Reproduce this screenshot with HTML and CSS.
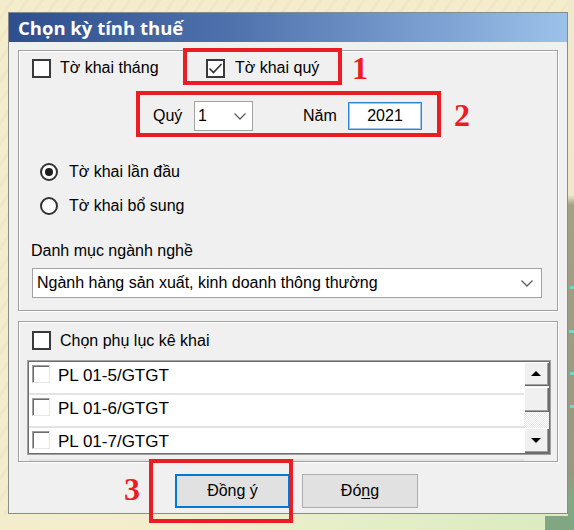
FILE: index.html
```html
<!DOCTYPE html>
<html lang="vi">
<head>
<meta charset="utf-8">
<title>Chọn kỳ tính thuế</title>
<link rel="stylesheet" href="styles.css">
</head>
<body>
<div class="window">
  <div class="titlebar">Chọn kỳ tính thuế</div>

  <div class="group group-main">
    <div class="row-type">
      <div class="opt opt-month"><span class="chk"></span><span class="txt">Tờ khai tháng</span></div>
      <div class="opt opt-quarter"><span class="chk"><svg class="tick" width="15" height="15" viewBox="0 0 15 15"><polyline points="1.5,7.5 5.5,11.5 13.5,3" fill="none" stroke="#333" stroke-width="1.6"/></svg></span><span class="txt">Tờ khai quý</span></div>
    </div>

    <div class="row-period">
      <span class="lbl-q">Quý</span>
      <div class="combo combo-q"><span>1</span><svg width="12" height="7" viewBox="0 0 12 7"><polyline points="0.5,0.5 6,6 11.5,0.5" fill="none" stroke="#606060" stroke-width="1.3"/></svg></div>
      <span class="lbl-y">Năm</span>
      <div class="textbox">2021</div>
    </div>

    <div class="opt radio-row r1"><span class="radio on"></span><span class="txt">Tờ khai lần đầu</span></div>
    <div class="opt radio-row r2"><span class="radio"></span><span class="txt">Tờ khai bổ sung</span></div>

    <div class="field-label">Danh mục ngành nghề</div>
    <div class="combo combo-wide"><span>Ngành hàng sản xuất, kinh doanh thông thường</span><svg width="12" height="7" viewBox="0 0 12 7"><polyline points="0.5,0.5 6,6 11.5,0.5" fill="none" stroke="#606060" stroke-width="1.3"/></svg></div>
  </div>

  <div class="group group-annex">
    <div class="opt annex-head"><span class="chk"></span><span class="txt">Chọn phụ lục kê khai</span></div>
    <div class="listbox">
      <div class="rows">
        <div class="item"><span class="chk3d"></span><span>PL 01-5/GTGT</span></div>
        <div class="item"><span class="chk3d"></span><span>PL 01-6/GTGT</span></div>
        <div class="item"><span class="chk3d"></span><span>PL 01-7/GTGT</span></div>
      </div>
      <div class="vscroll">
        <div class="sbtn"><span class="arrow-up"></span></div>
        <div class="thumb"></div>
        <div class="track"></div>
        <div class="sbtn"><span class="arrow-down"></span></div>
      </div>
    </div>
  </div>

  <div class="buttons">
    <div class="btn btn-ok"><span>Đồn<u>g</u> ý</span></div>
    <div class="btn btn-close"><span>Đó<u>n</u>g</span></div>
  </div>
</div>

<div class="mark m1"></div>
<div class="mark m2"></div>
<div class="mark m3"></div>
<div class="num n1">1</div>
<div class="num n2">2</div>
<div class="num n3">3</div>
</body>
</html>
```

FILE: styles.css
```css
html, body {
  margin: 0;
}

body {
  position: relative;
  width: 574px;
  height: 530px;
  overflow: hidden;
  box-sizing: border-box;
  padding: 12px 0 0 8px;
  font-family: "Liberation Sans", Arial, sans-serif;
  font-size: 16px;
  color: #000;
  background:
    linear-gradient(#6fd9cf, #6fd9cf) 570px 286px / 4px 3px no-repeat,
    linear-gradient(#6fd9cf, #6fd9cf) 569px 330px / 5px 3px no-repeat,
    linear-gradient(#6fd9cf, #6fd9cf) 570px 372px / 4px 3px no-repeat,
    linear-gradient(#6fd9cf, #6fd9cf) 570px 405px / 4px 3px no-repeat,
    linear-gradient(#80a782, #80a782) right bottom / 29px 14px no-repeat,
    linear-gradient(to bottom, #f0e9cc 0, #efe8ca 195px, #a4a086 205px, #979880 470px, #83a883 500px, #80a782 100%) right top / 6px 100% no-repeat,
    linear-gradient(to right, #f3edcc 0, #f2eecb 170px, #e6efc7 330px, #dcebc0 540px) left bottom / 100% 16px no-repeat,
    repeating-linear-gradient(125deg, #f4edcb 0 9px, #f0e8c4 9px 12px);
}

/* window */
.window {
  width: 560px;
  height: 502px;
  box-sizing: border-box;
  border: 1px solid #8a8a8a;
  background: #f0f0f0;
}

.titlebar {
  height: 29px;
  line-height: 29px;
  padding-left: 9px;
  background: linear-gradient(to right, #2e4e8d 0%, #4f72ad 40%, #7a9fd0 75%, #9cc2ea 100%);
  color: #fff;
  font-family: "Open Sans", "Noto Sans", sans-serif;
  font-weight: 700;
  font-size: 18.5px;
  white-space: nowrap;
}

/* group boxes */
.group {
  margin: 0 9px;
  box-sizing: border-box;
  border: 1px solid #a0a0a0;
  box-shadow: inset 1px 1px 0 #fff, 1px 1px 0 #fff;
}

.group-main {
  margin-top: 8px;
  height: 261px;
  padding: 7px 0 0 13px;
}

.group-annex {
  margin-top: 10px;
  height: 141px;
  padding: 9px 0 0 13px;
}

/* options */
.opt {
  display: flex;
  align-items: center;
  line-height: 18px;
  white-space: nowrap;
}

.chk {
  width: 19px;
  height: 19px;
  box-sizing: border-box;
  border: 2px solid #3a3a3a;
  background: #fff;
  margin-right: 9px;
  flex: none;
  display: flex;
  align-items: center;
  justify-content: center;
}

.row-type {
  display: flex;
  height: 20px;
}

.opt-month {
  width: 174px;
}

.opt-quarter .chk {
  margin-right: 10px;
}

.row-period {
  display: flex;
  align-items: center;
  margin-top: 23px;
  height: 30px;
  padding-left: 121px;
}

.lbl-q {
  width: 41px;
}

.lbl-y {
  width: 45px;
  margin-left: 50px;
}

.combo {
  display: flex;
  align-items: center;
  justify-content: space-between;
  box-sizing: border-box;
  border: 1px solid #a2a2a2;
  background: #fff;
  white-space: nowrap;
}

.combo-q {
  width: 59px;
  height: 30px;
  padding: 0 6px 0 3px;
}

.textbox {
  width: 74px;
  height: 28px;
  box-sizing: border-box;
  border: 1px solid #2f86d8;
  box-shadow: inset 0 0 0 1px #9cc6ef;
  background: #fff;
  text-align: center;
  line-height: 26px;
}

.radio-row {
  height: 18px;
  padding-left: 8px;
}

.r1 {
  margin-top: 32px;
}

.r2 {
  margin-top: 16px;
}

.radio {
  width: 18px;
  height: 18px;
  box-sizing: border-box;
  border: 2px solid #333;
  border-radius: 50%;
  background: #fff;
  margin-right: 11px;
  flex: none;
  display: flex;
  align-items: center;
  justify-content: center;
}

.radio.on::after {
  content: "";
  width: 8px;
  height: 8px;
  border-radius: 50%;
  background: #1e1e1e;
}

.field-label {
  margin-top: 27px;
  line-height: 18px;
  margin-left: -1px;
}

.combo-wide {
  margin-top: 8px;
  width: 510px;
  height: 30px;
  padding: 0 8px 0 4px;
}

/* annex */
.annex-head {
  height: 19px;
}

.listbox {
  display: flex;
  margin: 10px 0 0 -5px;
  width: 524px;
  height: 95px;
  box-sizing: border-box;
  border: 1px solid #a0a0a0;
  box-shadow: inset 1px 1px 0 #6e6e6e, inset -1px -1px 0 #6e6e6e;
  padding: 1px;
  background: #fff;
}

.rows {
  flex: 1;
}

.item {
  display: flex;
  align-items: flex-start;
  height: 28px;
  border-bottom: 2px solid #e3e3e3;
  padding: 3px 0 0 3px;
  box-sizing: content-box;
  font-size: 17px;
  line-height: 19px;
  white-space: nowrap;
}

.item span:last-child {
  margin-top: 1px;
}

.chk3d {
  width: 18px;
  height: 18px;
  box-sizing: border-box;
  border-top: 1px solid #a0a0a0;
  border-left: 1px solid #a0a0a0;
  border-right: 1px solid #e6e6e6;
  border-bottom: 1px solid #e6e6e6;
  box-shadow: inset 1px 1px 0 #6c6c6c;
  background: #fff;
  margin-right: 8px;
  flex: none;
}

.vscroll {
  width: 25px;
  display: flex;
  flex-direction: column;
  background: #f0f0f0;
}

.sbtn, .thumb {
  box-sizing: border-box;
  background: #f0f0f0;
  box-shadow: inset 1px 1px 0 #fff, inset -1px -1px 0 #696969, inset -2px -2px 0 #a0a0a0;
  display: flex;
  align-items: center;
  justify-content: center;
}

.sbtn {
  height: 24px;
}

.sbtn:last-child {
  height: 25px;
}

.thumb {
  height: 25px;
  margin-top: 1px;
}

.track {
  height: 16px;
  background: repeating-conic-gradient(#e6e6e6 0 25%, #fff 0 50%) 0 0 / 2px 2px;
}

.arrow-up {
  width: 0;
  height: 0;
  border-left: 5px solid transparent;
  border-right: 5px solid transparent;
  border-bottom: 5px solid #000;
  margin: -1px 1px 0 0;
}

.arrow-down {
  width: 0;
  height: 0;
  border-left: 5px solid transparent;
  border-right: 5px solid transparent;
  border-top: 5px solid #000;
  margin: 0 1px 0 0;
}

/* buttons */
.buttons {
  display: flex;
  margin: 12px 0 0 166px;
}

.btn {
  height: 34px;
  box-sizing: border-box;
  background: #e1e1e1;
  border: 1px solid #adadad;
  display: flex;
  align-items: center;
  justify-content: center;
  white-space: nowrap;
}

.btn u {
  text-underline-offset: 2px;
}

.btn-ok {
  width: 115px;
  border: 2px solid #0078d7;
}

.btn-close {
  width: 116px;
  margin-left: 12px;
}

/* annotations */
.mark {
  position: absolute;
  box-sizing: border-box;
  border: 4px solid #ec1c24;
}

.m1 { left: 183px; top: 48px; width: 159px; height: 37px; }
.m2 { left: 136px; top: 91px; width: 305px; height: 46px; }
.m3 { left: 149px; top: 459px; width: 144px; height: 64px; }

.num {
  position: absolute;
  font-family: "Liberation Serif", "Times New Roman", serif;
  font-weight: bold;
  font-size: 32px;
  line-height: 1;
  color: #ec1c24;
}

.n1 { left: 352px; top: 52px; }
.n2 { left: 454px; top: 99px; }
.n3 { left: 124px; top: 473px; }
```
